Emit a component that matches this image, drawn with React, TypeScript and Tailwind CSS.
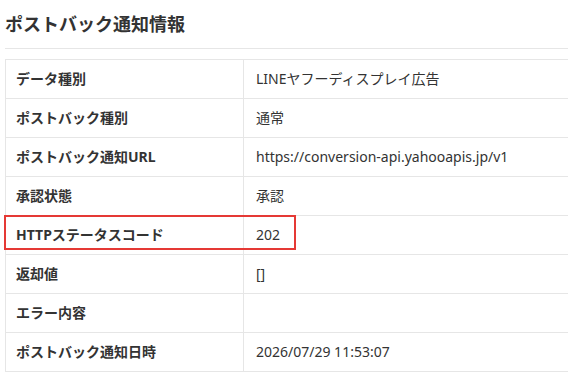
const rows: [string, string][] = [
  ["データ種別", "LINEヤフーディスプレイ広告"],
  ["ポストバック種別", "通常"],
  ["ポストバック通知URL", "https://conversion-api.yahooapis.jp/v1"],
  ["承認状態", "承認"],
  ["HTTPステータスコード", "202"],
  ["返却値", "[]"],
  ["エラー内容", ""],
  ["ポストバック通知日時", "2026/07/29 11:53:07"],
];

export default function App() {
  return (
    <div
      className="w-[568px] h-[374px] overflow-hidden bg-white text-[#333] pl-[5px]"
      style={{ fontFamily: '"Noto Sans", "Noto Sans CJK JP", sans-serif' }}
    >
      {/* 見出し */}
      <h2 className="h-[49px] flex items-center text-[18px] leading-6 font-bold border-b border-[#e6e6e6] w-[600px]">
        ポストバック通知情報
      </h2>

      {/* 詳細テーブル */}
      <div className="relative mt-[10px]">
        <table className="w-[600px] border-collapse text-[14px] leading-[18px] border border-[#e6e6e6]">
          <tbody>
            {rows.map(([label, value]) => (
              <tr key={label} className="h-[39px] border-b border-[#e6e6e6]">
                <th className="w-[238px] p-0 text-left font-bold pl-[10px] border-r border-[#e6e6e6]">
                  {label}
                </th>
                <td className="p-0 pl-3">{value}</td>
              </tr>
            ))}
          </tbody>
        </table>
        {/* 強調枠 */}
        <div className="absolute left-[-1px] top-[156px] w-[292px] h-[35px] border-2 border-[#e53935] pointer-events-none" />
      </div>
    </div>
  );
}
